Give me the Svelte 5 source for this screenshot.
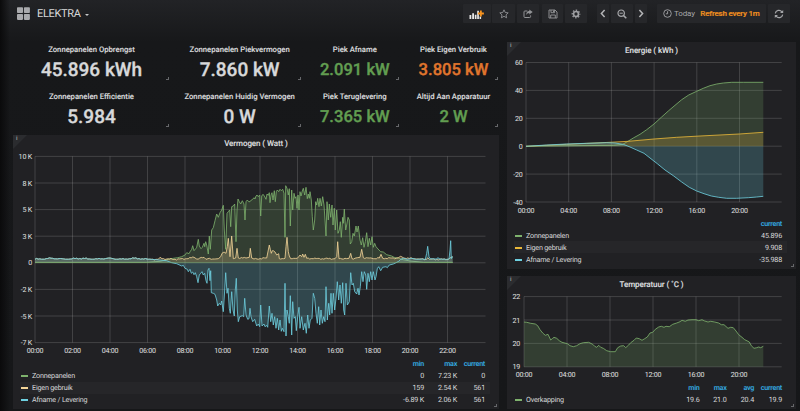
<script>
  const stats = [
    { title: 'Zonnepanelen Opbrengst', value: '45.896 kWh', tone: 'white' },
    { title: 'Zonnepanelen Piekvermogen', value: '7.860 kW', tone: 'white' },
    { title: 'Piek Afname', value: '2.091 kW', tone: 'green' },
    { title: 'Piek Eigen Verbruik', value: '3.805 kW', tone: 'orange' },
    { title: 'Zonnepanelen Efficientie', value: '5.984', tone: 'white' },
    { title: 'Zonnepanelen Huidig Vermogen', value: '0 W', tone: 'white' },
    { title: 'Piek Teruglevering', value: '7.365 kW', tone: 'green' },
    { title: 'Altijd Aan Apparatuur', value: '2 W', tone: 'green' }
  ];

  // Series are sampled at three units per pixel: "x,y x,y ..."
  const parse = (s, ox, oy) =>
    s.trim().split(/\s+/).map((p) => {
      const [x, y] = p.split(',').map(Number);
      return [ox + x / 3, oy + y / 3];
    });
  const line = (pts) => 'M' + pts.map(([x, y]) => x.toFixed(1) + ' ' + y.toFixed(1)).join('L');
  const area = (pts, base) =>
    line(pts) + `L${pts[pts.length - 1][0].toFixed(1)} ${base}L${pts[0][0].toFixed(1)} ${base}Z`;

  // Small standby-load ripple between two x positions
  function ripple(from, to, mid, amp, seed) {
    const out = [];
    for (let x = from; x <= to; x += 1.6) {
      const n = Math.sin(x * 0.52 + seed) * 0.5 + Math.sin(x * 0.23 + seed * 2) * 0.5 + Math.sin(x * 1.9 + seed) * 0.35;
      out.push([x, mid - Math.max(-0.4, n) * amp]);
    }
    return out;
  }
  // Fill long gaps between samples with ripple
  function dense(pts, amp) {
    const out = [];
    pts.forEach((p, i) => {
      out.push(p);
      const q = pts[i + 1];
      if (!q || q[0] - p[0] < 4) return;
      for (let x = p[0] + 1.5; x < q[0] - 1; x += 1.5) {
        const t = (x - p[0]) / (q[0] - p[0]);
        out.push([x, p[1] + (q[1] - p[1]) * t - (Math.sin(x * 1.7) + Math.sin(x * 0.6)) * amp]);
      }
    });
    return out;
  }

  const standby = ripple(35, 147, 258.8, 0.9, 1);

  const zon = [
    ...parse('105,397 440,397 480,394 505,388 520,385 533,383 545,380 555,375 560,368 567,371 571,364 575,358 578,347 582,362 587,356 590,352 595,328 598,348 603,356 607,352 612,340 614,350 617,335 620,345 625,372 628,318 631,358 635,300 640,293 645,272 650,252 655,262 660,248 665,240 670,226 673,300 677,358 681,250 685,245 689,240 692,290 695,230 700,228 704,222 708,335 711,240 714,207 718,215 722,222 727,212 732,222 735,270 738,215 742,210 746,215', 0, 130),
    ...parse('0,215 4,210 8,208 12,203 15,207 18,198 21,195 25,200 29,195 32,258 35,198 39,193 43,198 48,208 51,192 55,196 58,188 60,218 63,195 66,188 69,210 73,182 76,215 79,185 82,180 86,185 90,178 94,182 98,178 102,190 105,322 107,167 111,175 115,195 118,176 121,288 125,180 128,240 132,190 135,205 138,200 141,235 144,195 147,240 150,185 153,198 157,183 160,175 164,195 168,172 172,206 175,192 178,205 180,185 184,210 187,260 190,300 194,270 197,215 200,225 203,205 207,230 210,205 214,228 218,200 222,225 225,270 228,318 231,215 235,270 238,222 242,262 246,225 249,285 253,235 256,300 260,240 264,310 268,300 271,275 274,322 278,262 280,280 283,237 287,300 290,285 294,262 298,270 301,342 305,335 309,310 313,318 318,288 321,306 325,288 330,330 334,345 338,323 342,352 346,335 350,308 354,350 358,325 362,345 366,320 370,352 374,340 378,350 384,357 392,365 400,366 410,374 425,378 432,382 445,385 460,389 480,393 520,397 608,397', 250, 130)
  ];
  const gebruik = dense([
    ...standby,
    ...parse('445,388 475,388 480,382 486,386 525,388 560,386 582,382 590,387 612,382 618,388 628,385 634,388 655,386 662,380 666,370 672,366 678,370 682,350 685,325 690,380 695,318 700,386 707,384 711,355 715,384 738,384', 0, 130),
    ...parse('-2,382 1,355 5,384 12,387 50,384 58,345 61,358 64,370 67,362 70,362 75,366 80,375 86,371 88,386 92,387 105,385 108,350 111,322 115,365 118,378 122,386 142,385 146,380 150,375 155,380 158,372 162,382 166,373 170,385 190,386 255,386 260,380 263,335 267,386 297,385 302,370 306,386 322,383 330,382 335,358 340,383 370,386 388,384 393,373 398,385 440,384 452,379 460,383 500,387 530,388 533,383 538,388 595,388 603,382 608,380', 250, 130)
  ], 0.4);
  const levering = [
    ...standby,
    ...parse('440,27 470,29 500,32 515,38 530,41 545,48 550,46 555,55 562,58 565,65 570,58 574,70 578,66 582,74 586,68 590,80 594,98 598,75 602,70 606,65 610,75 614,70 618,92 621,100 624,60 627,55 630,92 632,62 634,128 640,130 645,133 650,150 653,168 658,160 662,165 665,153 670,185 674,120 677,68 681,130 684,115 688,175 691,190 695,125 699,180 703,198 706,120 709,85 712,180 715,215 719,200 727,197 731,200 734,145 738,195 743,208 747,206', 0, 250),
    ...parse('0,175 3,200 8,215 14,208 20,228 25,222 29,230 32,165 36,228 42,222 45,230 50,226 53,232 58,168 62,215 66,190 70,225 74,200 78,235 82,205 86,240 90,210 94,244 97,235 102,245 105,100 108,258 111,180 115,200 118,220 121,137 125,255 128,155 132,205 136,200 139,242 143,200 147,172 150,235 155,200 160,240 165,220 169,250 173,195 177,235 181,210 186,205 190,130 194,145 198,190 202,220 206,170 209,225 213,180 217,220 221,200 225,215 228,110 232,210 236,160 239,195 243,130 246,190 250,130 254,180 258,145 262,95 266,150 270,105 274,160 278,98 281,180 284,195 288,100 292,165 298,155 302,68 306,105 310,100 314,125 320,132 324,115 327,135 331,110 335,65 339,95 343,65 347,75 350,118 354,70 358,95 362,65 366,90 370,65 375,90 378,80 382,56 386,50 392,62 398,52 408,50 412,53 418,45 430,42 438,38 446,34 452,28 460,25 472,28 485,25 500,28 515,27 526,28 530,10 533,-11 537,20 541,26 560,27 563,23 570,27 590,28 597,27 600,0 602,-28 604,26 606,20 608,22', 250, 250)
  ];

  const eZon = parse('78,334 340,331 368,328 384,319 400,309 420,298 440,284 462,267 484,247 505,228 525,211 545,194 566,180 590,169 610,160 630,152 650,147 670,144 695,142 730,142 790,142', 500, 35);
  const eEigen = parse('78,334 200,328 330,322 385,319 462,312 530,307 600,303 718,297 790,292', 500, 35);
  const eLev = parse('78,334 140,330 200,327 260,325 320,323 345,324 370,328 390,336 410,345 432,355 450,369 472,386 495,405 520,422 545,441 568,457 590,468 612,476 634,483 656,487 680,490 710,490 745,488 770,486 790,484', 500, 35);
  const temp = parse('72,351 80,352 92,355 106,357 113,362 120,374 128,384 136,391 144,388 152,405 157,401 162,397 170,400 178,407 186,412 202,416 210,422 220,425 230,422 240,416 250,413 266,412 278,418 284,424 290,427 296,421 302,427 310,430 320,437 332,440 346,440 353,428 362,423 371,422 377,428 386,420 392,413 402,406 409,399 418,401 426,406 434,401 442,396 450,384 458,382 466,373 476,366 484,364 492,367 498,364 508,365 518,358 530,354 540,350 546,346 556,349 564,345 576,344 588,344 596,347 606,344 614,348 624,351 632,349 644,351 656,354 664,359 672,359 684,370 692,367 700,368 708,378 716,389 726,397 734,404 744,409 748,411 754,422 762,430 770,428 776,426 782,428 790,424', 500, 205);

  const watt = {
    xs: Array.from({ length: 12 }, (_, i) => [35 + i * 37.5, String(i * 2).padStart(2, '0') + ':00']),
    ys: ['10 K', '8 K', '5 K', '3 K', '0', '-2 K', '-5 K', '-7 K'].map((t, i) => [156.4 + i * 26.6, t])
  };
  const hours4 = (x0, step) =>
    Array.from({ length: 6 }, (_, i) => [x0 + i * step, String(i * 4).padStart(2, '0') + ':00']);
  const kwh = {
    xs: hours4(526, 42.7),
    ys: ['60', '40', '20', '0', '-20', '-40'].map((t, i) => [62.5 + i * 27.9, t])
  };
  const deg = {
    xs: hours4(524, 43),
    ys: ['22', '21', '20', '19'].map((t, i) => [296.6 + i * 23.4, t])
  };

  const G = '#7eb26d', Y = '#eab839', P = '#f4d598', C = '#6ed0e0';
</script>

{#snippet axes(a, left, right, dx)}
  {@const top = a.ys[0][0]}
  {@const bottom = a.ys[a.ys.length - 1][0]}
  {#each a.ys as [y, label]}
    <line class="grid" x1={left} x2={right} y1={y} y2={y} />
    <text x={left - dx} y={y + 2.6} text-anchor="end">{label}</text>
  {/each}
  {#each a.xs as [x, label]}
    <line class="grid" x1={x} x2={x} y1={top} y2={bottom} />
    <text {x} y={bottom + 10.6} text-anchor="middle">{label}</text>
  {/each}
{/snippet}

{#snippet series(pts, color, base, dim)}
  <path d={area(pts, base)} fill={color} fill-opacity={dim} />
  <path d={line(pts)} fill="none" stroke={color} stroke-width="0.9" stroke-opacity="0.9" stroke-linejoin="round" />
{/snippet}

<div class="page">
  <header>
    <div class="brand">
      <svg width="13" height="13" viewBox="0 0 13 13" fill="#a9aaad">
        <rect x="0" y="0.2" width="6" height="5.9" rx=".8" /><rect x="6.9" y="0.2" width="6" height="5.9" rx=".8" />
        <rect x="0" y="7" width="6" height="5.9" rx=".8" /><rect x="6.9" y="7" width="6" height="5.9" rx=".8" />
      </svg>
      <span>ELEKTRA</span>
      <i class="caret"></i>
    </div>
    <nav>
      <button class="add" aria-label="Add panel">
        <svg width="16" height="12" viewBox="0 0 16 12">
          <path d="M.5 7h1.8v4H.5zM3.2 5.3H5V11H3.2zM5.8 6.7h1.7V11H5.8zM8.2 2.8h1.7V11H8.2zM10.6 8.6h1.5V11h-1.5z" fill="#e8e8e8" />
          <path d="M11 2.6h1.8v2h2.1v1.8h-2.1v2H11v-2H8.9V4.6H11z" fill="#f7931e" />
        </svg>
      </button>
      <button class="star" aria-label="Star">
        <svg width="10" height="10" viewBox="0 0 10 10" fill="none" stroke="#929396" stroke-width=".9" stroke-linejoin="round"><path d="M5 .8l1.25 2.7 2.95.35L7 5.85l.6 2.95L5 7.3 2.4 8.8 3 5.85.8 3.85l2.95-.35z" /></svg>
      </button>
      <button class="share" aria-label="Share">
        <svg width="10" height="10" viewBox="0 0 10 10" fill="none" stroke="#929396"><path d="M4.4 2H1.9Q1 2 1 2.9v4.7q0 .9.9.9h4.8q.9 0 .9-.9V6.4" /><path d="M6.3.4 9.7 3 6.3 5.6V4Q4.2 3.9 3.4 6 3 2.3 6.3 2z" fill="#929396" stroke="none" /></svg>
      </button>
      <button class="save" aria-label="Save">
        <svg width="10" height="10" viewBox="0 0 10 10" fill="none" stroke="#929396" stroke-width=".95"><path d="M1 1h6l2 2v6H1zM3 1v2.7h3.6V1M2.7 9V6h4.6v3M5.5 1.4v1.8" /></svg>
      </button>
      <button class="gear" aria-label="Settings">
        <svg width="10" height="10" viewBox="0 0 10 10" fill="none" stroke="#a0a1a4"><circle cx="5" cy="5" r="2.5" stroke-width="1.7" /><circle cx="5" cy="5" r="3.8" stroke-width="1.2" stroke-dasharray="1.5 1.485" stroke-dashoffset=".75" /></svg>
      </button>
      <button class="prev" aria-label="Back">
        <svg width="6" height="9" viewBox="0 0 6 9" fill="none" stroke="#b4b5b7" stroke-width="1.5"><path d="M4.6 1 1.4 4.5l3.2 3.5" /></svg>
      </button>
      <button class="zoom" aria-label="Zoom out">
        <svg width="10" height="10" viewBox="0 0 10 10" fill="none" stroke="#a5a6a9"><circle cx="4.2" cy="4.2" r="3.2" stroke-width="1.2" /><path d="M6.6 6.6 9.3 9.3" stroke-width="1.5" /><path d="M2.6 4.2h3.2" /></svg>
      </button>
      <button class="next" aria-label="Forward">
        <svg width="6" height="9" viewBox="0 0 6 9" fill="none" stroke="#b4b5b7" stroke-width="1.5"><path d="M1.4 1l3.2 3.5L1.4 8" /></svg>
      </button>
      <button class="time">
        <svg width="9" height="9" viewBox="0 0 9 9" fill="none" stroke="#a5a6a9" stroke-width=".9"><circle cx="4.5" cy="4.5" r="3.8" /><path d="M4.6 2.2v2.6H2.9" /></svg>
        <span>Today</span><b>Refresh every 1m</b>
      </button>
      <button class="reload" aria-label="Refresh">
        <svg width="10" height="10" viewBox="0 0 10 10" fill="none" stroke="#a5a6a9" stroke-width="1.2"><path d="M1.3 4.4A3.7 3.7 0 0 1 7.9 2.8M8.7 5.6A3.7 3.7 0 0 1 2.1 7.2" /><path d="M9.2.9v3.2H6zM.8 9.1V5.9H4z" fill="#a5a6a9" stroke="none" /></svg>
      </button>
    </nav>
  </header>

  <main>
    <div class="col left">
      <section class="stats">
        {#each stats as s}
          <div class="stat">
            <h3>{s.title}</h3>
            <p class={s.tone}>{s.value}</p>
            <i class="corner"></i>
          </div>
        {/each}
      </section>

      <section class="panel watt">
        <i class="info"></i><em>i</em>
        <h2>Vermogen ( Watt )</h2>
        <svg class="plot" width="486" height="206" viewBox="13 150 486 206">
          {@render axes(watt, 35, 485.5, 3)}
          {@render series(zon, G, 262.6, 0.2)}
          {@render series(gebruik, P, 262.6, 0.22)}
          {@render series(levering, C, 262.6, 0.22)}
          <path d="M35 262.6H453" stroke={G} stroke-opacity=".55" stroke-width=".9" />
        </svg>
        <div class="legend">
          <div class="row head"><span></span><span></span><b>min</b><b>max</b><b>current</b></div>
          <div class="row"><i style:background={G}></i><span>Zonnepanelen</span><u>0</u><u>7.23 K</u><u>0</u></div>
          <div class="row odd"><i style:background={P}></i><span>Eigen gebruik</span><u>159</u><u>2.54 K</u><u>561</u></div>
          <div class="row"><i style:background={C}></i><span>Afname / Levering</span><u>-6.89 K</u><u>2.06 K</u><u>561</u></div>
        </div>
        <i class="corner"></i>
      </section>
    </div>

    <div class="col right">
      <section class="panel kwh">
        <i class="info"></i><em>i</em>
        <h2>Energie ( kWh )</h2>
        <svg class="plot" width="289" height="160" viewBox="507 57 289 160">
          {@render axes(kwh, 526, 781.7, 3.5)}
          {@render series(eZon, G, 146.2, 0.2)}
          {@render series(eEigen, Y, 146.2, 0.22)}
          {@render series(eLev, C, 146.2, 0.22)}
        </svg>
        <div class="legend">
          <div class="row head"><span></span><span></span><b>current</b></div>
          <div class="row"><i style:background={G}></i><span>Zonnepanelen</span><u>45.896</u></div>
          <div class="row odd"><i style:background={Y}></i><span>Eigen gebruik</span><u>9.908</u></div>
          <div class="row"><i style:background={C}></i><span>Afname / Levering</span><u>-35.988</u></div>
        </div>
        <i class="corner"></i>
      </section>

      <section class="panel deg">
        <i class="info"></i><em>i</em>
        <h2>Temperatuur ( ˚C )</h2>
        <svg class="plot" width="289" height="90" viewBox="507 291 289 90">
          {@render axes(deg, 524, 781.7, 4)}
          {@render series(temp, G, 366.8, 0.2)}
        </svg>
        <div class="legend">
          <div class="row head"><span></span><span></span><b>min</b><b>max</b><b>avg</b><b>current</b></div>
          <div class="row"><i style:background={G}></i><span>Overkapping</span><u>19.6</u><u>21.0</u><u>20.4</u><u>19.9</u></div>
        </div>
        <i class="corner"></i>
      </section>
    </div>
  </main>
</div>

<style>
  :global(body) { background: #151618; overflow: hidden; }
  .page {
    box-sizing: border-box;
    width: 800px;
    height: 411px;
    overflow: hidden;
    font-family: Roboto, 'Liberation Sans', sans-serif;
    text-rendering: geometricPrecision;
    color: #d8d9da;
    background: linear-gradient(90deg, #0a0a0b 0, rgba(16, 17, 18, 0) 10px), linear-gradient(#222326 0, #17181a 42px, #161719 100%);
  }
  header { display: flex; justify-content: space-between; height: 42px; box-sizing: border-box; padding: 4px 10px 0 17px; }
  .brand { display: flex; align-items: center; height: 19px; font-size: 11px; }
  .brand span { margin-left: 7px; color: #d8d9da; letter-spacing: -0.32px; }
  .caret { margin: 2px 0 0 4px; border: 2px solid transparent; border-top-color: #c8c9ca; border-bottom: 0; }
  nav { display: flex; height: 19px; }
  button {
    display: flex; align-items: center; justify-content: center; flex: none;
    height: 19px; padding: 0; border: 0; border-radius: 1px;
    background: #26272a; font: inherit; color: #a5a6a9;
  }
  .add { width: 27.4px; }
  .star { width: 22.7px; margin-left: 1.6px; }
  .share { width: 22.3px; margin-left: 2px; }
  .save { width: 21.7px; margin-left: 2.4px; }
  .gear { width: 22.3px; margin-left: 1.7px; }
  .prev { width: 11.7px; margin-left: 9.7px; }
  .zoom { width: 22.3px; margin-left: 2.3px; }
  .next { width: 12.3px; margin-left: 1.7px; }
  .time { width: 109.3px; margin-left: 9.4px; font-size: 8px; letter-spacing: -0.15px; }
  .time span { margin-left: 2px; }
  .time b { margin-left: 5.5px; color: #f0901f; font-weight: 500; letter-spacing: -0.2px; -webkit-text-stroke: 0.2px; }
  .reload { width: 22px; margin-left: 2px; }

  main { display: flex; gap: 8px; padding-left: 13px; }
  .left { width: 486px; }
  .right { width: 289px; display: flex; flex-direction: column; gap: 7px; }
  .stats { display: grid; grid-template-columns: 157px 124px 91px 91px; grid-template-rows: 47px 46px; justify-content: space-between; }
  .stat { position: relative; text-align: center; height: 40px; }
  h3 { margin: 0; padding-top: 2px; font-size: 7.7px; line-height: 11px; font-weight: 500; white-space: nowrap; -webkit-text-stroke: 0.12px; }
  p { margin: 2px 0 0; font-size: 19px; line-height: 25px; font-weight: 500; white-space: nowrap; -webkit-text-stroke: 0.35px; }
  .white { color: #d8d9da; }
  .green, .orange { font-size: 16.6px; line-height: 27px; }
  .green { color: #629e51; }
  .orange { color: #e0752d; }
  .corner { position: absolute; right: 2px; bottom: 2px; width: 2px; height: 2px; border: solid #66676a; border-width: 0 1px 1px 0; }
  .stat .corner { right: 1px; bottom: 2px; }

  .panel { position: relative; background: #212124; }
  .watt { height: 274px; }
  .kwh { height: 227px; }
  .deg { height: 133px; }
  .info { position: absolute; left: 0; top: 0; border: 7px solid; border-color: #2b2c2f transparent transparent #2b2c2f; }
  em { position: absolute; left: 3px; top: 0; font: 500 6px/8px Roboto, sans-serif; color: #a0a1a3; }
  h2 { margin: 0; height: 15px; font-size: 8px; line-height: 18px; font-weight: 500; letter-spacing: -0.08px; text-align: center; color: #dcdddf; -webkit-text-stroke: 0.12px; }
  .plot { display: block; }
  .plot text { font-size: 7.1px; letter-spacing: -0.2px; fill: #e0e1e2; }
  .grid { stroke: #c8c8c8; stroke-opacity: 0.2; stroke-width: 1; }

  .legend { font-size: 7.2px; letter-spacing: -0.2px; padding: 0 9px 0 7px; }
  .watt .legend { padding-top: 2px; }
  .row { display: grid; align-items: center; height: 12px; line-height: 13px; padding-right: 5px; white-space: nowrap; }
  .watt .row { line-height: 12px; grid-template-columns: 12px 1fr 60px 33px 28px; }
  .kwh .row { grid-template-columns: 12px 1fr 50px; }
  .deg .row { grid-template-columns: 12px 1fr 30px 27px 27.5px 28px; }
  .row i { width: 7px; height: 2px; margin-left: 1px; }
  .row u, .row b { text-align: right; text-decoration: none; }
  .row b { color: #33a2d9; font-weight: 700; letter-spacing: -0.3px; }
  .odd { background: #262629; }
</style>
